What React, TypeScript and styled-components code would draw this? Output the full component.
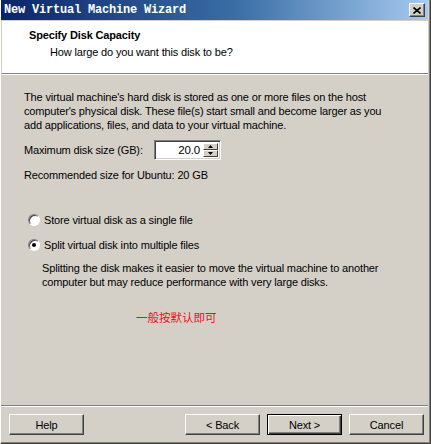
import React from "react";
import styled, { createGlobalStyle } from "styled-components";

const Global = createGlobalStyle`
  html, body { margin: 0; padding: 0; background: #d4d0c8; }
  body { font-family: "Liberation Sans", Arial, sans-serif; font-size: 11px; color: #000; letter-spacing: -0.15px; }
  * { box-sizing: border-box; }
`;

const Window = styled.div`
  width: 431px;
  height: 444px;
  display: flex;
  flex-direction: column;
  background: #d4d0c8;
  border-left: 1px solid #fff;
  border-right: 1px solid #404040;
  border-bottom: 1px solid #404040;
  box-shadow: inset -1px -1px 0 #808080;
  padding: 0 2px 3px 1px;
`;

const TitleBar = styled.div`
  height: 20px;
  margin: 0 0 1px -1px;
  display: flex;
  align-items: center;
  justify-content: space-between;
  padding: 0 3px 0 3px;
  background: linear-gradient(to right, #0a246a 0%, #3a6ea5 55%, #a6caf0 100%);
`;

const Title = styled.span`
  font-family: "Liberation Mono", "DejaVu Sans Mono", monospace;
  font-weight: bold;
  font-size: 12px;
  letter-spacing: -0.2px;
  color: #fff;
`;

const CloseButton = styled.div`
  width: 16px;
  height: 14px;
  background: #d4d0c8;
  border-top: 1px solid #fff;
  border-left: 1px solid #fff;
  border-right: 1px solid #404040;
  border-bottom: 1px solid #404040;
  box-shadow: inset -1px -1px 0 #808080;
  display: flex;
  align-items: center;
  justify-content: center;
`;

const Header = styled.div`
  height: 53px;
  background: #fff;
  border-bottom: 1px solid #808080;
  box-shadow: 0 1px 0 #fff;
  padding: 8px 0 0 27px;
`;

const HeaderTitle = styled.div`
  font-weight: bold;
  font-size: 11px;
  line-height: 13px;
`;

const HeaderSub = styled.div`
  margin: 4px 0 0 21px;
  line-height: 13px;
`;

const Body = styled.div`
  flex: 1;
  padding: 16px 0 0 22px;
  display: flex;
  flex-direction: column;
`;

const Para = styled.p<{ $top?: number }>`
  margin: ${(p) => p.$top ?? 0}px 0 0 0;
  line-height: 14px;
  width: 370px;
`;

const Row = styled.div<{ $top: number }>`
  display: flex;
  align-items: center;
  margin-top: ${(p) => p.$top}px;
`;

const Label = styled.span`
  width: 130px;
`;

const Spinner = styled.div`
  width: 67px;
  height: 20px;
  display: flex;
  background: #fff;
  border-top: 1px solid #808080;
  border-left: 1px solid #808080;
  border-right: 1px solid #fff;
  border-bottom: 1px solid #fff;
  box-shadow: inset 1px 1px 0 #404040, inset -1px -1px 0 #d4d0c8;
  padding: 2px 2px 2px 2px;
`;

const SpinValue = styled.div`
  flex: 1;
  text-align: right;
  padding-right: 3px;
  line-height: 14px;
  font-size: 11.5px;
`;

const SpinButtons = styled.div`
  width: 15px;
  display: flex;
  flex-direction: column;
`;

const SpinBtn = styled.div`
  flex: 1;
  background: #d4d0c8;
  border-top: 1px solid #fff;
  border-left: 1px solid #fff;
  border-right: 1px solid #404040;
  border-bottom: 1px solid #404040;
  display: flex;
  align-items: center;
  justify-content: center;
`;

const RadioRow = styled.label<{ $top: number }>`
  display: flex;
  align-items: center;
  gap: 4px;
  margin: ${(p) => p.$top}px 0 0 4px;
  line-height: 14px;
`;

const RadioCircle = styled.span<{ $checked?: boolean }>`
  width: 12px;
  height: 12px;
  border-radius: 50%;
  background: #fff;
  border: 1px solid;
  border-color: #808080 #fff #fff #808080;
  box-shadow: inset 1px 1px 0 #404040;
  display: flex;
  align-items: center;
  justify-content: center;
  &::after {
    content: "";
    width: 4px;
    height: 4px;
    border-radius: 50%;
    background: ${(p) => (p.$checked ? "#000" : "transparent")};
  }
`;

const Desc = styled.p`
  margin: 9px 0 0 18px;
  line-height: 14px;
  width: 360px;
`;

const Note = styled.div`
  margin: 20px 0 0 112px;
  color: #e8121a;
  font-family: "Noto Sans CJK SC", sans-serif;
  font-size: 11.5px;
  letter-spacing: 0;
  line-height: 16px;
`;

const Separator = styled.div`
  height: 2px;
  border-top: 1px solid #808080;
  border-bottom: 1px solid #fff;
  margin-left: -1px;
`;

const Footer = styled.div`
  display: flex;
  align-items: center;
  gap: 7px;
  padding: 7px 4px 5px 7px;
`;

const Button = styled.div<{ $default?: boolean; $push?: boolean }>`
  width: 75px;
  height: 21px;
  display: flex;
  align-items: center;
  justify-content: center;
  background: #d4d0c8;
  margin-left: ${(p) => (p.$push ? "auto" : "0")};
  border: 1px solid;
  border-color: ${(p) => (p.$default ? "#000" : "#fff #404040 #404040 #fff")};
  box-shadow: ${(p) =>
    p.$default
      ? "inset 1px 1px 0 #fff, inset -1px -1px 0 #404040, inset -2px -2px 0 #808080"
      : "inset -1px -1px 0 #808080"};
`;

const Spacer = styled.div`
  flex: 1;
`;

const Arrow = ({ up }: { up?: boolean }) => (
  <svg width="5" height="3" viewBox="0 0 5 3">
    <path d={up ? "M2.5 0 L5 3 L0 3 Z" : "M0 0 L5 0 L2.5 3 Z"} fill="#000" />
  </svg>
);

export default function App() {
  return (
    <>
      <Global />
      <Window>
        <TitleBar>
          <Title>New Virtual Machine Wizard</Title>
          <CloseButton>
            <svg width="8" height="7" viewBox="0 0 8 7">
              <path d="M0.5 0.5 L7.5 6.5 M7.5 0.5 L0.5 6.5" stroke="#000" strokeWidth="1.6" />
            </svg>
          </CloseButton>
        </TitleBar>
        <Header>
          <HeaderTitle>Specify Disk Capacity</HeaderTitle>
          <HeaderSub>How large do you want this disk to be?</HeaderSub>
        </Header>
        <Body>
          <Para>
            The virtual machine's hard disk is stored as one or more files on the host
            computer's physical disk. These file(s) start small and become larger as you
            add applications, files, and data to your virtual machine.
          </Para>
          <Row $top={8}>
            <Label>Maximum disk size (GB):</Label>
            <Spinner>
              <SpinValue>20.0</SpinValue>
              <SpinButtons>
                <SpinBtn>
                  <Arrow up />
                </SpinBtn>
                <SpinBtn>
                  <Arrow />
                </SpinBtn>
              </SpinButtons>
            </Spinner>
          </Row>
          <Para $top={8}>Recommended size for Ubuntu: 20 GB</Para>
          <RadioRow $top={31}>
            <RadioCircle />
            Store virtual disk as a single file
          </RadioRow>
          <RadioRow $top={11}>
            <RadioCircle $checked />
            Split virtual disk into multiple files
          </RadioRow>
          <Desc>
            Splitting the disk makes it easier to move the virtual machine to another
            computer but may reduce performance with very large disks.
          </Desc>
          <Note>一般按默认即可</Note>
          <Spacer />
        </Body>
        <Separator />
        <Footer>
          <Button>Help</Button>
          <Button $push>&lt; Back</Button>
          <Button $default>Next &gt;</Button>
          <Button>Cancel</Button>
        </Footer>
      </Window>
    </>
  );
}
